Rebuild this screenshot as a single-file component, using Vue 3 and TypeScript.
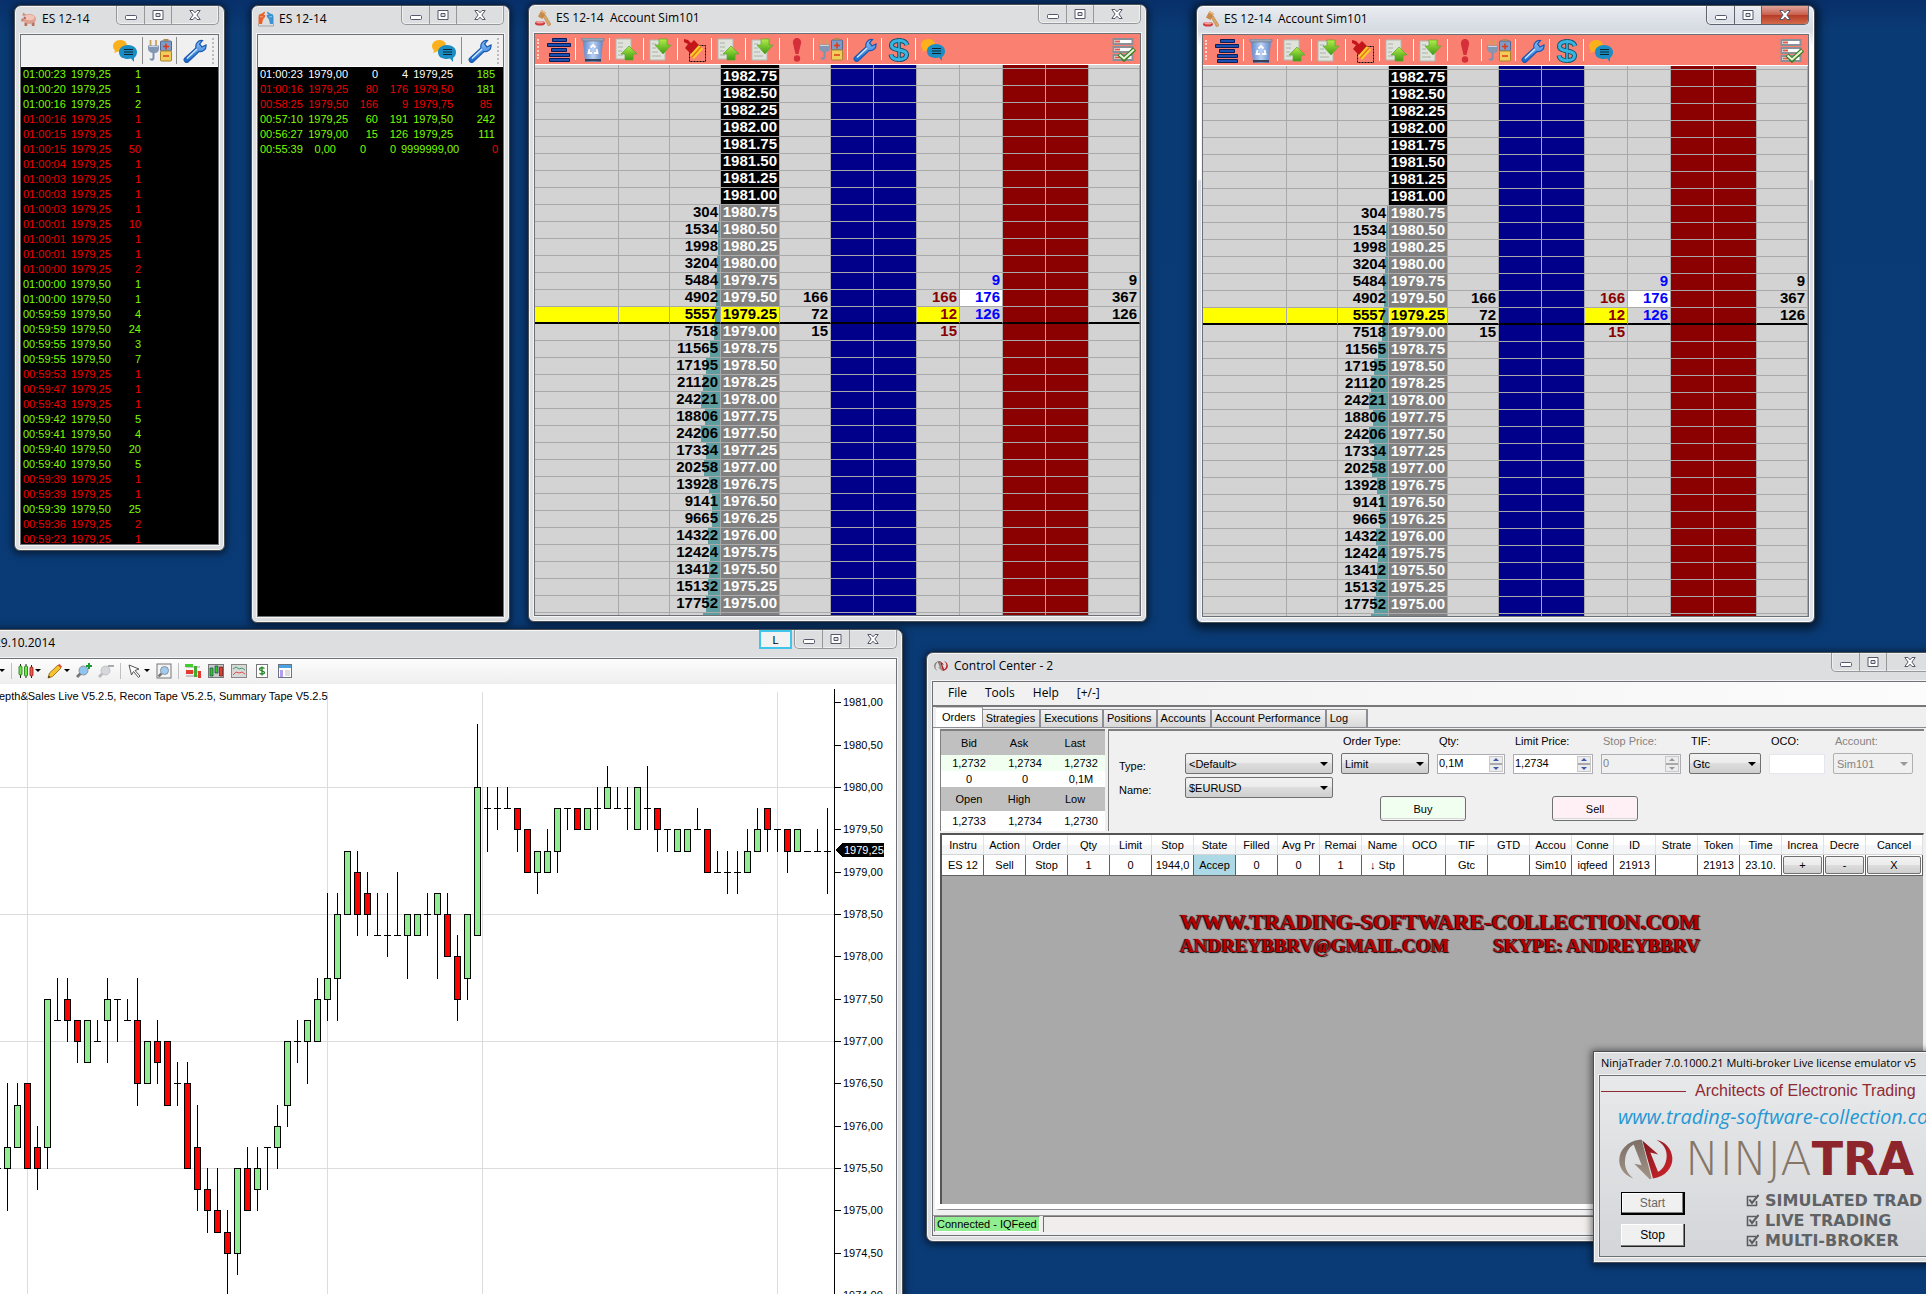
<script setup lang="ts">
type Tone = 'up' | 'down' | 'flat'

interface Trade { time: string; price: string; size: string; tone: Tone }
const trade = (line: string): Trade => {
  const [time, price, size, flag] = line.split(' ')
  return { time, price, size, tone: flag === 'u' ? 'up' : 'down' }
}
const trades: Trade[] = [
  '01:00:23 1979,25 1 u', '01:00:20 1979,25 1 u', '01:00:16 1979,25 2 u', '01:00:16 1979,25 1 d',
  '01:00:15 1979,25 1 d', '01:00:15 1979,25 50 d', '01:00:04 1979,25 1 d', '01:00:03 1979,25 1 d',
  '01:00:03 1979,25 1 d', '01:00:03 1979,25 1 d', '01:00:01 1979,25 10 d', '01:00:01 1979,25 1 d',
  '01:00:01 1979,25 1 d', '01:00:00 1979,25 2 d', '01:00:00 1979,50 1 u', '01:00:00 1979,50 1 u',
  '00:59:59 1979,50 4 u', '00:59:59 1979,50 24 u', '00:59:55 1979,50 3 u', '00:59:55 1979,50 7 u',
  '00:59:53 1979,25 1 d', '00:59:47 1979,25 1 d', '00:59:43 1979,25 1 d', '00:59:42 1979,50 5 u',
  '00:59:41 1979,50 4 u', '00:59:40 1979,50 20 u', '00:59:40 1979,50 5 u', '00:59:39 1979,25 1 d',
  '00:59:39 1979,25 1 d', '00:59:39 1979,50 25 u', '00:59:36 1979,25 2 d', '00:59:23 1979,25 1 d',
].map(trade)

interface Recon { cells: string[]; total: string; tone: Tone; totalTone: Tone; blank?: boolean }
const recon: Recon[] = [
  { cells: ['01:00:23', '1979,00', '0', '4', '1979,25'], total: '185', tone: 'flat', totalTone: 'up' },
  { cells: ['01:00:16', '1979,25', '80', '176', '1979,50'], total: '181', tone: 'down', totalTone: 'up' },
  { cells: ['00:58:25', '1979,50', '166', '9', '1979,75'], total: '85', tone: 'down', totalTone: 'down' },
  { cells: ['00:57:10', '1979,25', '60', '191', '1979,50'], total: '242', tone: 'up', totalTone: 'up' },
  { cells: ['00:56:27', '1979,00', '15', '126', '1979,25'], total: '111', tone: 'up', totalTone: 'up' },
  { cells: ['00:55:39', '0,00', '0', '0', '9999999,00'], total: '0', tone: 'up', totalTone: 'down', blank: true },
]

const volumes = [
  0, 0, 0, 0, 0, 0, 0, 0, 304, 1534, 1998, 3204, 5484, 4902, 5557, 7518, 11565, 17195, 21120, 24221,
  18806, 24206, 17334, 20258, 13928, 9141, 9665, 14322, 12424, 13412, 15132, 17752,
]
const extras: Record<string, { last: string; sell: string; buy: string; sum: string }> = {
  '1979.75': { last: '', sell: '', buy: '9', sum: '9' },
  '1979.50': { last: '166', sell: '166', buy: '176', sum: '367' },
  '1979.25': { last: '72', sell: '12', buy: '126', sum: '126' },
  '1979.00': { last: '15', sell: '15', buy: '', sum: '' },
}
const ladder = volumes.map((volume, i) => {
  const price = (1982.75 - i * 0.25).toFixed(2)
  return {
    price,
    volume: volume ? String(volume) : '',
    bar: Math.ceil(volume * 0.00078),
    beyond: i < 8,
    current: price === '1979.25',
    best: price === '1979.50',
    ...(extras[price] ?? { last: '', sell: '', buy: '', sum: '' }),
  }
})
const ladderWindows = [
  { id: 'dom-a', active: false },
  { id: 'dom-b', active: true },
]
const ladderTools = [
  ['i-stack', 'Center'], ['i-trash', 'Clear'], ['i-doc-up', 'Level up'], ['i-doc-down', 'Level down'],
  ['i-brush', 'Clean'], ['i-doc-up', 'Page up'], ['i-doc-down', 'Page down'], ['i-alert', 'Alert'],
  ['i-power', 'Connection'], ['i-wrench', 'Settings'], ['i-dollar', 'Profit'], ['i-chat', 'Messages'],
]

/* Chart levels are quarter points below 1980,00: x, colour, open/close range, wick range */
type Candle = [number, 'g' | 'r' | 'd', number, number, number, number]
const candles: Candle[] = [
  [-3, 'd', 18, 18, 18, 18], [7, 'g', 17, 18, 14, 20], [17, 'g', 15, 17, 14, 17], [27, 'r', 14, 18, 14, 18],
  [37, 'r', 17, 18, 16, 19], [47, 'g', 10, 17, 10, 18], [57, 'd', 11, 11, 9, 11], [67, 'r', 10, 11, 9, 12],
  [77, 'r', 11, 12, 11, 13], [87, 'g', 11, 13, 11, 13], [97, 'd', 12, 12, 11, 12], [107, 'g', 10, 11, 9, 13],
  [117, 'd', 10, 10, 10, 12], [127, 'd', 11, 11, 10, 11], [137, 'r', 11, 14, 9, 15], [147, 'g', 12, 14, 12, 14],
  [157, 'r', 12, 13, 11, 14], [167, 'r', 12, 15, 12, 15], [177, 'd', 14, 14, 13, 15], [187, 'r', 14, 18, 13, 18],
  [197, 'r', 17, 19, 15, 20], [207, 'r', 19, 20, 18, 21], [217, 'r', 20, 21, 18, 21], [227, 'r', 21, 22, 20, 25],
  [237, 'g', 18, 22, 18, 23], [247, 'r', 18, 20, 17, 20], [257, 'g', 18, 19, 17, 20], [267, 'd', 17, 17, 17, 19],
  [277, 'g', 16, 17, 15, 18], [287, 'g', 12, 15, 12, 16], [297, 'd', 12, 12, 11, 13], [307, 'g', 11, 12, 11, 14],
  [317, 'g', 10, 12, 9, 12], [327, 'g', 9, 10, 5, 11], [337, 'g', 6, 9, 5, 11], [347, 'g', 3, 6, 3, 6],
  [357, 'r', 4, 6, 3, 7], [367, 'r', 5, 6, 4, 7], [377, 'd', 7, 7, 5, 7], [387, 'd', 7, 7, 5, 8],
  [397, 'd', 7, 7, 4, 7], [407, 'g', 6, 7, 6, 9], [417, 'g', 6, 7, 6, 7], [427, 'd', 6, 6, 5, 7],
  [437, 'g', 5, 6, 5, 9], [447, 'r', 6, 8, 5, 8], [457, 'r', 8, 10, 7, 11], [467, 'g', 6, 9, 6, 10],
  [477, 'g', 0, 7, -3, 7], [487, 'd', 1, 1, 0, 3], [497, 'd', 1, 1, 0, 2], [507, 'd', 1, 1, 0, 1],
  [517, 'r', 1, 2, 1, 3], [527, 'r', 2, 4, 2, 4], [537, 'g', 3, 4, 3, 5], [547, 'g', 3, 4, 2, 4],
  [557, 'g', 1, 3, 1, 4], [567, 'd', 1, 1, 1, 2], [577, 'r', 1, 2, 1, 2], [587, 'g', 1, 2, 1, 2],
  [597, 'd', 1, 1, 0, 2], [607, 'g', 0, 1, -1, 1], [617, 'd', 1, 1, 0, 1], [627, 'd', 1, 1, 0, 2],
  [637, 'g', 0, 2, 0, 2], [647, 'd', 1, 1, -1, 2], [657, 'r', 1, 2, 1, 3], [667, 'd', 2, 2, 2, 3],
  [677, 'g', 2, 3, 2, 3], [687, 'g', 2, 3, 2, 3], [697, 'd', 2, 2, 1, 2], [707, 'r', 2, 4, 2, 4],
  [717, 'd', 4, 4, 3, 4], [727, 'd', 4, 4, 3, 5], [737, 'd', 4, 4, 3, 5], [747, 'g', 3, 4, 2, 4],
  [757, 'g', 2, 3, 1, 3], [767, 'r', 1, 2, 1, 3], [777, 'd', 2, 2, 2, 3], [787, 'r', 2, 3, 2, 4],
  [797, 'g', 2, 3, 2, 3], [807, 'd', 3, 3, 3, 3], [817, 'd', 3, 3, 2, 3], [827, 'd', 3, 3, 1, 5],
]
const levelY = (q: number): number => Math.round(103 + (q * 127) / 6)
const verticals = [27, 327, 482, 777]
const horizontals = [0, 6, 12, 18]
const axis = Array.from({ length: 15 }, (_, i) => ({
  label: (1981 - i * 0.5).toFixed(2).replace('.', ','),
  y: levelY(i * 2 - 4),
}))

const menus = ['File', 'Tools', 'Help', '[+/-]']
const tabs = ['Orders', 'Strategies', 'Executions', 'Positions', 'Accounts', 'Account Performance', 'Log']
const quoteRows = [
  { kind: 'head', cells: ['Bid', 'Ask', 'Last'] },
  { kind: 'mint', cells: ['1,2732', '1,2734', '1,2732'] },
  { kind: 'plain', cells: ['0', '0', '0,1M'] },
  { kind: 'head', cells: ['Open', 'High', 'Low'] },
  { kind: 'tall', cells: ['1,2733', '1,2734', '1,2730'] },
]
const orderColumns: [string, string][] = [
  ['Instru', 'ES 12'], ['Action', 'Sell'], ['Order', 'Stop'], ['Qty', '1'], ['Limit', '0'], ['Stop', '1944,0'],
  ['State', 'Accep'], ['Filled', '0'], ['Avg Pr', '0'], ['Remai', '1'], ['Name', '↓ Stp'], ['OCO', ''],
  ['TIF', 'Gtc'], ['GTD', ''], ['Accou', 'Sim10'], ['Conne', 'iqfeed'], ['ID', '21913'], ['Strate', ''],
  ['Token', '21913'], ['Time', '23.10.'], ['Increa', '+'], ['Decre', '-'], ['Cancel', 'X'],
]
const features = ['SIMULATED TRAD', 'LIVE TRADING', 'MULTI-BROKER']
const captions = ['min', 'max', 'close']
</script>

<template>
  <svg class="sprite" aria-hidden="true">
    <defs>
      <linearGradient id="g-blue" x1="0" y1="0" x2="0" y2="1"><stop offset="0" stop-color="#8cc4f8" /><stop offset="1" stop-color="#1466cf" /></linearGradient>
      <linearGradient id="g-green" x1="0" y1="0" x2="0" y2="1"><stop offset="0" stop-color="#b4ee4a" /><stop offset="1" stop-color="#3d9a12" /></linearGradient>
      <linearGradient id="g-bin" x1="0" y1="0" x2="1" y2="0"><stop offset="0" stop-color="#5f87c8" /><stop offset=".5" stop-color="#bcd2f4" /><stop offset="1" stop-color="#5f87c8" /></linearGradient>
      <linearGradient id="g-brown" x1="0" y1="0" x2="0" y2="1"><stop offset="0" stop-color="#7b6e66" /><stop offset="1" stop-color="#a39386" /></linearGradient>
      <linearGradient id="g-red" x1="0" y1="0" x2="1" y2="1"><stop offset="0" stop-color="#7e1a20" /><stop offset="1" stop-color="#d3222a" /></linearGradient>

      <symbol id="i-min" viewBox="0 0 12 12"><rect x=".5" y="6.500" width="11" height="4" rx="1" fill="#fff" stroke="#53586a" /></symbol>
      <symbol id="i-max" viewBox="0 0 12 12"><path fill-rule="evenodd" d="M1 1.500h10v9H1zM4 4.500h4v3H4z" fill="#fff" stroke="#53586a" /></symbol>
      <symbol id="i-close" viewBox="0 0 12 12"><path d="M.8 1.500h3.200L6 3.800l2-2.300h3.200L7.900 6l3.300 4.500H8L6 8.200l-2 2.300H.8L4.100 6z" fill="#fff" stroke="#53586a" /></symbol>

      <symbol id="i-pig" viewBox="0 0 16 16"><ellipse cx="8.500" cy="8" rx="6.500" ry="5" fill="#dda090" /><ellipse cx="8.500" cy="6.500" rx="5" ry="2.800" fill="#f0c4b6" /><path d="M1.500 5l.5-3.500L5.500 4z" fill="#d08c7c" /><path d="M3.500 11.500V15H6l.5-2.500zM10.500 12.500L11 15h2.500v-4z" fill="#b87060" /><circle cx="4" cy="7" r=".8" fill="#713" /><path d="M.5 7.500h2v3h-2z" fill="#c27666" /></symbol>
      <symbol id="i-hands" viewBox="0 0 16 16"><path d="M.5 13V6L1 3.500l3-1L6.500.5 7 2 5.500 3.800l1.800.2L7 6 5 8.500 4 13z" fill="#e8632c" /><path d="M2 5.500l3 .5" stroke="#f6a27c" /><path d="M15.500 13V6L15 3.500l-3-1L9.500.5 9 2l1.500 1.800L8.700 4 9 6l2 2.500 1 4.500z" fill="#3c93cf" /><path d="M14 5.500L11 6" stroke="#8cc6ec" /><path d="M.5 13v2h15v-2" fill="none" stroke="#a5a5a5" /></symbol>
      <symbol id="i-gavel" viewBox="0 0 16 16"><path d="M6.500 0L11 2.500 7.500 9 3 6.500z" fill="#c98b4a" /><path d="M6.500 0L11 2.500l-.8 1.500-4.500-2.500z" fill="#e6ba80" /><path d="M8 6l2.300-1L16 14.500 13.500 16z" fill="#dba765" stroke="#a9743c" stroke-width=".5" /><ellipse cx="5" cy="13.300" rx="5" ry="2.300" fill="#cf3a3a" /><ellipse cx="5" cy="12.200" rx="3.800" ry="1.200" fill="#f0a0a0" /></symbol>

      <symbol id="i-chat" viewBox="0 0 24 24"><path d="M7 1C3 1 0 4 0 7c0 3 2 4 2 5l-1 2 4-1.500C12 13 14 10 14 7c0-4-3-6-7-6z" fill="#fbb01c" /><path d="M15 6c-5 0-9 3-9 7 0 5 4 7 9 7 1 0 2 0 3-.4L21 23v-4c2-1.500 3-3.500 3-6 0-4-4-7-9-7z" fill="#1a8ec4" /><path d="M11 10.500h9M11 13h9M11 15.500h9" stroke="#10242f" stroke-width="1.200" /></symbol>
      <symbol id="i-power" viewBox="0 0 24 24"><path d="M2.500 1v6M8 1v6" stroke="#c9a25c" stroke-width="1.800" /><path d="M0 6.500h11v3c0 3-2 4.500-4 4.500H4.500C2 13.500 0 12 0 9.500" fill="#8498b4" /><path d="M1 7.500h9" stroke="#c8d4e4" /><path d="M5.500 13v5.500c0 3-3 2.500-3 1" fill="none" stroke="#7b91b2" stroke-width="2" /><rect x="12.500" y="2" width="11" height="10" rx="1" fill="#7e9cc8" stroke="#55688c" /><rect x="15.500" y="0" width="5" height="2" fill="#b08a50" /><rect x="12.500" y="12" width="11" height="10" rx="1" fill="#f2cc5a" stroke="#a8842c" /><path d="M15 7.500h6M18 4.500v6M15 17h6" stroke="#e03a14" stroke-width="1.600" /></symbol>
      <symbol id="i-wrench" viewBox="0 0 24 24"><path d="M1.500 19.500L13 9c-1-4 2-8 6.500-7.500L16.500 5l2.500 3 4-2c.5 4-3 7.500-7 6.500L5 23c-2 1.500-5-1.500-3.500-3.500z" fill="url(#g-blue)" stroke="#1b58ae" stroke-width="1.200" /><path d="M4 19.500l10-9.500" stroke="#d6ebff" stroke-width="1.300" /></symbol>
      <symbol id="i-stack" viewBox="0 0 24 24"><path d="M5.500.5h14v3h-14zM.5 5.500h23v3H.5zM4.500 10.500h15v3h-15zM2.500 15.500h20v3h-20zM2.500 20.500h20v3h-20z" fill="#1c51b4" stroke="#0a1c58" /></symbol>
      <symbol id="i-trash" viewBox="0 0 24 24"><path d="M2 2h20l-2 22H4z" fill="url(#g-bin)" /><path d="M4 21h16v2.500H4z" fill="#33405c" /><rect x="1" y="0" width="22" height="3" rx="1" fill="#9aa7b8" stroke="#5f6b80" stroke-width=".6" /><path d="M9.500 9.500l2.500-2.500 2.500 2.500M15.500 11l1 4H13M8.500 11l-1 4H11" fill="none" stroke="#fff" stroke-width="1.800" /></symbol>
      <symbol id="i-doc-up" viewBox="0 0 24 24"><path d="M1 1h15v20H1z" fill="#dfe3dc" stroke="#b5b9b0" /><path d="M3 5h5M3 9h5M3 13h4M3 17h5" stroke="#aab0a8" /><path d="M14 8l8 8h-4v6h-8v-6H6z" fill="url(#g-green)" stroke="#5aa62a" stroke-width=".7" /></symbol>
      <symbol id="i-doc-down" viewBox="0 0 24 24"><path d="M1 2h15v20H1z" fill="#dfe3dc" stroke="#b5b9b0" /><path d="M3 6h4M3 10h4M3 14h6M3 18h9" stroke="#aab0a8" /><path d="M10 1h8v6h4l-8 9-8-9h4z" fill="url(#g-green)" stroke="#5aa62a" stroke-width=".7" /></symbol>
      <symbol id="i-brush" viewBox="0 0 24 24"><rect x="6.500" y="7.500" width="16" height="16" fill="none" stroke="#000" stroke-dasharray="2 1" /><path d="M1 1l4 1 3 3 3-3 5 5-8 9-6-6 3-4-4-2z" fill="#c4161a" /><path d="M16 7l4 4-9 10-4-4z" fill="#f8cf28" /><path d="M18 9l-9 10" stroke="#f0701c" stroke-width="1.500" /></symbol>
      <symbol id="i-alert" viewBox="0 0 24 24"><path d="M12 0c3 0 4.500 2.500 4 5.500L13.500 16h-3L8 5.500C7.500 2.500 9 0 12 0z" fill="#d5303a" /><circle cx="12" cy="20.500" r="3.200" fill="#d5303a" /></symbol>
      <symbol id="i-dollar" viewBox="0 0 24 24"><path d="M12 0v24" stroke="#14506c" stroke-width="3.600" /><path d="M20 7c-1-3-4-4.500-8-4.500S4.500 4 4.500 7.500c0 6 15 3 15 9 0 3.500-3.500 5-7.500 5S4.500 20 4 16.500" fill="none" stroke="#14506c" stroke-width="5" /><path d="M12 .8v22.400" stroke="#35b5e0" stroke-width="1.600" /><path d="M20 7c-1-3-4-4.500-8-4.500S4.500 4 4.500 7.500c0 6 15 3 15 9 0 3.500-3.500 5-7.500 5S4.500 20 4 16.500" fill="none" stroke="#35b5e0" stroke-width="3" /></symbol>
      <symbol id="i-list" viewBox="0 0 24 24"><path d="M1.500 1h19v5h-19zM1.500 9h19v5h-19zM1.500 17h19v5h-19z" fill="#fff" stroke="#8a9098" stroke-width="2" /><path d="M3 3.500h5M3 11.500h5M3 19.500h5" stroke="#e45a4a" stroke-width="2" /><path d="M7 16l5 5L22.500 11" fill="none" stroke="#3f7d28" stroke-width="4.500" /><path d="M7.500 16.500l4.500 4L22 11.500" fill="none" stroke="#e6f5d8" stroke-width="2" /></symbol>

      <symbol id="i-candles" viewBox="0 0 16 16"><path d="M2.500 1v14M8 1v14M13.500 2v13" stroke="#222" /><rect x="1" y="3" width="3" height="9" rx="1" fill="#6fe84a" stroke="#1d6e12" stroke-width=".8" /><rect x="6.500" y="3" width="3" height="10" rx="1" fill="#6fe84a" stroke="#1d6e12" stroke-width=".8" /><rect x="12" y="4" width="3" height="9" rx="1" fill="#ee5a4c" stroke="#8c1610" stroke-width=".8" /></symbol>
      <symbol id="i-pencil" viewBox="0 0 16 16"><path d="M1 15l1.500-5L11 2l3 3-8.500 8.500z" fill="#f4c430" stroke="#a8781a" /><path d="M11 2l1.500-1.300L15 3.500 14 5z" fill="#e0554a" /><path d="M1 15l.8-2.500 1.700 1.700z" fill="#333" /></symbol>
      <symbol id="i-zoom-in" viewBox="0 0 16 16"><path d="M1 14l4-4" stroke="#777" stroke-width="3" /><circle cx="7.500" cy="7.500" r="4.500" fill="#8fc4ee" stroke="#8a929c" /><path d="M13 0v6M10 3h6" stroke="#1c9a30" stroke-width="2" /></symbol>
      <symbol id="i-zoom-out" viewBox="0 0 16 16"><path d="M1 14l4-4" stroke="#bbb" stroke-width="3" /><circle cx="7.500" cy="7.500" r="4.500" fill="#d5d7da" stroke="#bfc2c6" /><path d="M10 3h6" stroke="#aaa" stroke-width="2" /></symbol>
      <symbol id="i-pointer" viewBox="0 0 16 16"><path d="M2 2l10 4-4 1.500 5 5.500-1.500 1.500-5-6L4.500 12z" fill="#fff" stroke="#555" /></symbol>
      <symbol id="i-find" viewBox="0 0 16 16"><rect x="1" y="1" width="14" height="14" fill="#f4f4f4" stroke="#777" /><path d="M2.500 13.500l3-3" stroke="#777" stroke-width="2.500" /><circle cx="8.500" cy="7.500" r="4" fill="#9fccf0" stroke="#8a929c" /></symbol>
      <symbol id="i-depth" viewBox="0 0 16 16"><path d="M1 4h14M1 9h14M1 13h14" stroke="#999" /><path d="M0 1h8v3H0z" fill="#3fce2c" /><path d="M1 7h7v4H1z" fill="#e23c30" /><path d="M9 3h3v11H9z" fill="#3fae2c" /><path d="M13 8h3v7h-3z" fill="#e23c30" /></symbol>
      <symbol id="i-bars" viewBox="0 0 16 16"><rect x=".5" y="1.500" width="15" height="13" fill="#c8c8c8" stroke="#777" /><path d="M2 5h3v8H2zM7 3h3v7H7z" fill="#36c424" stroke="#145" stroke-width=".7" /><path d="M11.500 4h3v9h-3z" fill="#e23c30" stroke="#611" stroke-width=".7" /></symbol>
      <symbol id="i-lines" viewBox="0 0 16 16"><rect x=".5" y="1.500" width="15" height="13" fill="#d8d8d8" stroke="#888" /><path d="M2 6l3-2 3 2 3-1 3 2" fill="none" stroke="#3aa06a" /><path d="M2 12l3-3 3 1 3-1 3 2" fill="none" stroke="#e05050" /></symbol>
      <symbol id="i-money" viewBox="0 0 16 16"><rect x="2.500" y="1.500" width="11" height="13" fill="#fff" stroke="#777" /><path d="M10.500 5.500c-2-1.500-5-.8-5 .8 0 2 5 1.200 5 3.200 0 1.800-3.300 2-5 .8M8 3.500v9" fill="none" stroke="#2a8a2a" stroke-width="1.400" /></symbol>
      <symbol id="i-panel" viewBox="0 0 16 16"><rect x="1.500" y="1.500" width="13" height="13" fill="#fff" stroke="#6c7484" /><path d="M2 2h12v3H2z" fill="#4aa3e0" /><path d="M3 7h3v7H3z" fill="#b49cf0" /><path d="M8 8h5M8 10h5M8 12h5" stroke="#bbb" /></symbol>

      <symbol id="i-ninja" viewBox="0 0 162 122"><path d="M62 2C24 6-2 36 1 68c2 24 18 42 42 50C26 104 16 86 18 66c1-24 12-42 26-50l24 62-22-4 46 46 6-2L68 2z" fill="url(#g-brown)" /><path d="M70 4l32 114c36-4 60-32 58-62-2-28-22-48-48-54 20 12 32 28 31 50-1 22-12 40-26 46L94 40l24 6z" fill="url(#g-red)" /></symbol>
      <symbol id="i-check" viewBox="0 0 14 14"><path d="M10 2.500H1.500v9h9V7" fill="none" stroke="#5a5d60" stroke-width="1.600" /><path d="M3.500 5.500L6 9l6.500-8" fill="none" stroke="#5a5d60" stroke-width="2" /></symbol>
    </defs>
  </svg>

  <main class="desktop">
    <section class="win tape-win">
      <header class="title">
        <svg class="app-icon"><use href="#i-pig" /></svg>
        <h2>ES 12-14</h2>
        <div class="captions"><button v-for="c in captions" :key="c" :class="c" :aria-label="c"><svg><use :href="'#i-' + c" /></svg></button></div>
      </header>
      <div class="client">
        <div class="tape-tools">
          <button aria-label="Messages"><svg><use href="#i-chat" /></svg></button>
          <button aria-label="Connection"><svg><use href="#i-power" /></svg></button>
          <button aria-label="Settings"><svg><use href="#i-wrench" /></svg></button>
          <i class="grip"></i>
        </div>
        <table class="tape">
          <tbody>
            <tr v-for="(t, i) in trades" :key="i" :class="t.tone">
              <td class="time">{{ t.time }}</td><td class="price">{{ t.price }}</td><td class="size">{{ t.size }}</td><td></td>
            </tr>
          </tbody>
        </table>
      </div>
    </section>

    <section class="win recon-win">
      <header class="title">
        <svg class="app-icon"><use href="#i-hands" /></svg>
        <h2>ES 12-14</h2>
        <div class="captions"><button v-for="c in captions" :key="c" :class="c" :aria-label="c"><svg><use :href="'#i-' + c" /></svg></button></div>
      </header>
      <div class="client">
        <div class="tape-tools">
          <button aria-label="Messages"><svg><use href="#i-chat" /></svg></button>
          <button aria-label="Settings"><svg><use href="#i-wrench" /></svg></button>
          <i class="grip"></i>
        </div>
        <table class="tape recon">
          <colgroup><col class="c-time"><col class="c-price"><col class="c-qty"><col class="c-qty"><col class="c-ask"><col></colgroup>
          <tbody>
            <tr v-for="(r, i) in recon" :key="i" :class="[r.tone, { blank: r.blank }]">
              <td v-for="(c, k) in r.cells" :key="k">{{ c }}</td>
              <td :class="['total', r.totalTone]">{{ r.total }}</td>
            </tr>
          </tbody>
        </table>
      </div>
    </section>

    <section v-for="w in ladderWindows" :key="w.id" :class="['win', 'dom-win', w.id, { active: w.active }]">
      <header class="title">
        <svg class="app-icon"><use href="#i-gavel" /></svg>
        <h2>ES 12-14&nbsp; Account Sim101</h2>
        <div class="captions"><button v-for="c in captions" :key="c" :class="c" :aria-label="c"><svg><use :href="'#i-' + c" /></svg></button></div>
      </header>
      <div class="client">
        <div class="dom-tools">
          <i class="grip"></i>
          <button v-for="(t, i) in ladderTools" :key="i" :aria-label="t[1]"><svg><use :href="'#' + t[0]" /></svg></button>
          <button class="list" aria-label="Columns"><svg><use href="#i-list" /></svg></button>
        </div>
        <table class="ladder">
          <colgroup>
            <col class="w84"><col class="w51"><col class="w51"><col class="w59"><col class="w51">
            <col v-for="n in 6" :key="n" class="w43"><col>
          </colgroup>
          <tbody>
            <tr class="sliver">
              <td></td><td></td><td></td><td class="px beyond"></td><td></td><td class="bid"></td><td class="bid"></td><td></td><td></td><td class="ask"></td><td class="ask"></td><td></td>
            </tr>
            <tr v-for="r in ladder" :key="r.price" :class="{ current: r.current }">
              <td class="hl"></td><td class="hl"></td>
              <td class="hl vol" :style="{ backgroundSize: r.bar + 'px 100%' }">{{ r.volume }}</td>
              <td :class="['px', { beyond: r.beyond }]">{{ r.price }}</td>
              <td>{{ r.last }}</td>
              <td class="bid"></td><td class="bid"></td>
              <td class="sold">{{ r.sell }}</td>
              <td :class="['bought', { best: r.best }]">{{ r.buy }}</td>
              <td class="ask"></td><td class="ask"></td>
              <td>{{ r.sum }}</td>
            </tr>
            <tr>
              <td></td><td></td><td class="vol" :style="{ backgroundSize: '17px 100%' }"></td><td class="px"></td><td></td><td class="bid"></td><td class="bid"></td><td></td><td></td><td class="ask"></td><td class="ask"></td><td></td>
            </tr>
          </tbody>
        </table>
      </div>
    </section>

    <section class="win chart-win">
      <header class="title">
        <h2>29.10.2014</h2>
        <button class="link-btn">L</button>
        <div class="captions"><button v-for="c in captions" :key="c" :class="c" :aria-label="c"><svg><use :href="'#i-' + c" /></svg></button></div>
      </header>
      <div class="client">
        <div class="chart-tools">
          <button class="drop" aria-label="Interval"></button>
          <i class="sep"></i>
          <button class="drop" aria-label="Style"><svg><use href="#i-candles" /></svg></button>
          <button class="drop" aria-label="Draw"><svg><use href="#i-pencil" /></svg></button>
          <button aria-label="Zoom in"><svg><use href="#i-zoom-in" /></svg></button>
          <button aria-label="Zoom out"><svg><use href="#i-zoom-out" /></svg></button>
          <i class="sep"></i>
          <button class="drop" aria-label="Pointer"><svg><use href="#i-pointer" /></svg></button>
          <button aria-label="Find"><svg><use href="#i-find" /></svg></button>
          <i class="sep"></i>
          <div class="views">
            <button v-for="n in ['depth', 'bars', 'lines', 'money', 'panel']" :key="n" :aria-label="n"><svg><use :href="'#i-' + n" /></svg></button>
          </div>
        </div>
        <div class="plot">
          <svg class="candles" shape-rendering="crispEdges">
            <line v-for="x in verticals" :key="'v' + x" class="grid" :x1="x + 0.5" :x2="x + 0.5" y1="8" y2="100%" />
            <line v-for="q in horizontals" :key="'h' + q" class="grid" x1="0" x2="834" :y1="levelY(q) + 0.5" :y2="levelY(q) + 0.5" />
            <g v-for="c in candles" :key="c[0]">
              <rect v-if="c[4] !== c[5]" :x="c[0]" :y="levelY(c[4])" width="1" :height="levelY(c[5]) - levelY(c[4]) + 1" />
              <rect v-if="c[1] === 'd'" :x="c[0] - 3" :y="levelY(c[2])" width="7" height="1" />
              <rect v-else :class="c[1]" :x="c[0] - 2.5" :y="levelY(c[2]) + 0.5" width="6" :height="levelY(c[3]) - levelY(c[2])" />
            </g>
            <rect x="834" y="5" width="1" height="100%" />
            <g v-for="a in axis" :key="a.label">
              <rect x="835" :y="a.y" width="6" height="1" />
              <text x="843" :y="a.y + 4">{{ a.label }}</text>
            </g>
            <path d="M836 166l6-7h42v14h-42z" />
            <text class="tag" x="844" y="170">1979,25</text>
          </svg>
          <p class="studies">epth&amp;Sales Live V5.2.5, Recon Tape V5.2.5, Summary Tape V5.2.5</p>
        </div>
      </div>
    </section>

    <section class="win control-win">
      <header class="title">
        <svg class="app-icon"><use href="#i-ninja" /></svg>
        <h2>Control Center - 2</h2>
        <div class="captions"><button v-for="c in captions" :key="c" :class="c" :aria-label="c"><svg><use :href="'#i-' + c" /></svg></button></div>
      </header>
      <div class="client">
        <nav class="menu"><button v-for="m in menus" :key="m">{{ m }}</button></nav>
        <div class="tabs" role="tablist">
          <button v-for="(t, i) in tabs" :key="t" role="tab" :class="{ on: i === 0, last: t === 'Log' }">{{ t }}</button>
        </div>
        <div class="pane">
          <div class="ticket">
            <div class="quotes">
              <div v-for="(r, i) in quoteRows" :key="i" :class="['quote', r.kind]"><span v-for="(c, k) in r.cells" :key="k">{{ c }}</span></div>
            </div>
            <form class="entry" @submit.prevent>
              <div class="ident">
                <label for="tpl">Type:</label>
                <span class="select"><select id="tpl"><option>&lt;Default&gt;</option></select></span>
                <label for="sym">Name:</label>
                <span class="select"><select id="sym"><option>$EURUSD</option></select></span>
              </div>
              <div class="params">
                <div class="fields">
                  <div class="field f88"><label for="otype">Order Type:</label><span class="select"><select id="otype"><option>Limit</option></select></span></div>
                  <div class="field f70"><label for="qty">Qty:</label><span class="spin"><input id="qty" value="0,1M"><i></i></span></div>
                  <div class="field f80"><label for="lim">Limit Price:</label><span class="spin"><input id="lim" value="1,2734"><i></i></span></div>
                  <div class="field f80 off"><label for="stp">Stop Price:</label><span class="spin"><input id="stp" value="0" disabled><i></i></span></div>
                  <div class="field f72"><label for="tif">TIF:</label><span class="select"><select id="tif"><option>Gtc</option></select></span></div>
                  <div class="field f56"><label for="oco">OCO:</label><input id="oco" class="plain-input"></div>
                  <div class="field f80 off"><label for="acc">Account:</label><span class="select"><select id="acc" disabled><option>Sim101</option></select></span></div>
                </div>
                <div class="trade-btns"><button class="buy">Buy</button><button class="sell">Sell</button></div>
              </div>
            </form>
          </div>
          <div class="orders">
            <table>
              <colgroup><col v-for="n in 22" :key="n" class="w42"><col></colgroup>
              <thead><tr><th v-for="c in orderColumns" :key="c[0]">{{ c[0] }}</th></tr></thead>
              <tbody>
                <tr>
                  <td v-for="(c, i) in orderColumns" :key="c[0]" :class="{ accepted: c[0] === 'State' }">
                    <button v-if="i > 19">{{ c[1] }}</button><template v-else>{{ c[1] }}</template>
                  </td>
                </tr>
              </tbody>
            </table>
            <div class="watermark">
              <p class="big">WWW.TRADING-SOFTWARE-COLLECTION.COM</p>
              <p><span>ANDREYBBRV@GMAIL.COM</span><span>SKYPE: ANDREYBBRV</span></p>
            </div>
          </div>
        </div>
        <footer class="status"><span class="conn">Connected - IQFeed</span><span class="rest"></span></footer>
      </div>
    </section>

    <section class="win emu-win">
      <header class="title"><h2>NinjaTrader 7.0.1000.21 Multi-broker Live license emulator v5</h2></header>
      <div class="client">
        <p class="motto"><i></i>Architects of Electronic Trading</p>
        <a class="site" href="#">www.trading-software-collection.co</a>
        <div class="brand"><svg><use href="#i-ninja" /></svg><span>NINJA<b>TRA</b></span></div>
        <div class="emu-body">
          <div class="emu-btns"><button class="start">Start</button><button>Stop</button></div>
          <ul><li v-for="f in features" :key="f"><svg><use href="#i-check" /></svg>{{ f }}</li></ul>
        </div>
      </div>
    </section>
  </main>
</template>

<style>
body { margin: 0; background: #0a3b76; }
</style>

<style scoped>
.sprite { position: absolute; width: 0; height: 0; }
.desktop {
  position: relative; min-height: 100vh; overflow: hidden;
  background: linear-gradient(#08306a, #0a3a74 30px, #0a3b76);
  font: 11px/14px "Microsoft Sans Serif", "Liberation Sans", Arial, sans-serif; color: #000;
}
button, input, select { font: inherit; color: inherit; margin: 0; padding: 0; box-sizing: border-box; }
button { border: 0; background: none; }
h2, p, ul { margin: 0; padding: 0; list-style: none; font-weight: 400; }
table { border-collapse: separate; border-spacing: 0; table-layout: fixed; }
td, th { padding: 0; }
th { font-weight: 400; }

/* window frames */
.win {
  position: absolute; box-sizing: border-box; display: flex; flex-direction: column;
  padding: 0 5px 5px; border: 1px solid #4a4f56; border-radius: 7px 7px 6px 6px; background: #dddee0;
  box-shadow: inset 0 0 0 1px #f6f6f7, 0 1px 7px 2px rgba(0, 0, 0, .5);
}
.title { display: flex; align-items: flex-start; height: 28px; flex: none; }
.title h2 { flex: 1; font: 12px/16px "Segoe UI", "Open Sans", "Noto Sans", sans-serif; white-space: nowrap; padding-top: 5px; }
.app-icon { width: 16px; height: 16px; margin: 5px 5px 0 1px; }
.client { flex: 1; min-height: 0; display: flex; flex-direction: column; overflow: hidden; border: 1px solid #6d7074; box-shadow: 0 0 0 1px #f4f4f5; }
.captions { display: flex; border: 1px solid #96989c; border-top: 0; border-radius: 0 0 5px 5px; box-shadow: inset 0 0 0 1px #eeeff0; }
.captions button { width: 27px; height: 18px; display: grid; place-items: center; }
.captions button + button { border-left: 1px solid #96989c; }
.captions .close { width: 47px; }
.captions svg { width: 12px; height: 12px; }
.active { background: linear-gradient(#e9ecf0, #d5dae2 24px, #fff 40px, #fff 173px, #d5dae4 175px, #dfe3ea); box-shadow: inset 0 0 0 1px #fff, 0 2px 10px 4px rgba(0, 0, 0, .6); }
.active .captions, .active .captions button { border-color: #5d6470; }
.active .close { background: linear-gradient(#e0a49a, #c9604f 48%, #b53a26 50%, #d46a4a); border-radius: 0 0 4px 0; }

/* tape windows */
.tape-win { left: 14px; top: 5px; width: 211px; height: 546px; }
.recon-win { left: 251px; top: 5px; width: 259px; height: 618px; }
.tape-win .client, .recon-win .client { background: #000; }
.tape-tools { display: flex; flex: none; justify-content: flex-end; align-items: center; height: 31px; background: #f0f0f0; border-bottom: 1px solid #fff; }
.tape-tools button { width: 34px; height: 27px; display: grid; place-items: center; }
.tape-tools button + button { border-left: 1px solid #8d8d8d; }
.tape-tools svg, .dom-tools svg { width: 24px; height: 24px; }
.tape-tools button:nth-last-child(2) { width: 36px; }
.grip { flex: none; width: 4px; height: 26px; border-left: 2px dotted #bbb; }
.tape { width: 100%; line-height: 15px; }
.tape td { height: 15px; }
.up { color: #7cfc00; }
.down { color: #f00000; }
.flat { color: #fff; }
.tape .time { width: 48px; padding-left: 2px; }
.tape .price { width: 42px; }
.tape .size { width: 28px; text-align: right; }
.recon td { text-align: right; white-space: nowrap; }
.recon td:first-child { text-align: left; padding-left: 2px; }
.c-time { width: 48px; }
.c-price { width: 42px; }
.c-qty { width: 30px; }
.c-ask { width: 45px; }
.recon .total { padding-right: 8px; }
.recon .down.total { padding-right: 11px; }
.recon .blank td { padding-right: 12px; }
.recon .blank td:nth-child(5) { padding-right: 0; text-align: left; text-indent: -7px; }
.recon .blank .total { padding-right: 5px; }

/* ladder windows */
.dom-win { width: 619px; height: 618px; }
.dom-a { left: 528px; top: 4px; }
.dom-b { left: 1196px; top: 5px; }
.dom-tools { display: flex; flex: none; align-items: center; height: 30px; background: #fa8072; border-bottom: 1px solid #fff; }
.dom-tools .grip { width: 5px; border-color: #ffd6d0; margin-left: 2px; height: 20px; box-sizing: border-box; }
.dom-tools button { width: 34px; height: 22px; display: grid; place-items: center; border-right: 1px solid #fff; }
.dom-tools button:nth-last-child(-n+2) { border: 0; }
.dom-tools .list { margin-left: auto; width: 32px; }
.ladder { width: 100%; flex: none; font-size: 15px; font-weight: 700; line-height: 14px; }
.ladder td { height: 16px; text-align: right; vertical-align: top; padding-right: 2px; background-color: #d3d3d3; border: solid #a9a9a9; border-width: 0 1px 1px 0; }
.ladder tr { height: 17px; }
.ladder .sliver td { height: 3px; }
.ladder .sliver { height: 4px; }
.w84 { width: 84px; } .w51 { width: 51px; } .w59 { width: 59px; } .w43 { width: 43px; } .w42 { width: 42px; }
.ladder .px { background-color: #808080; color: #fff; }
.ladder .beyond { background-color: #000; }
.ladder .bid { background-color: #00008b; }
.ladder .ask { background-color: #8b0000; }
.ladder .vol { background-image: linear-gradient(#5f9ea0, #5f9ea0); background-repeat: no-repeat; background-position: right; }
.ladder .sold { color: #8b0000; }
.ladder .bought { color: #00f; }
.ladder .best { background-color: #fff; }
.ladder .current td { height: 15px; border-bottom: 2px solid #000; }
.ladder .current .hl, .ladder .current .px, .ladder .current .sold { background-color: #ff0; }
.ladder .current .px { color: #000; }

/* chart window */
.chart-win { left: -8px; top: 629px; width: 911px; bottom: -8px; }
.chart-win .client { margin-left: 1px; background: #fff; }
.chart-win h2 { margin-left: -4px; }
.link-btn { width: 33px; height: 19px; border: 2px solid #3fc4ea; background: #f2f2f2; margin-right: 2px; }
.chart-tools { display: flex; flex: none; align-items: center; gap: 6px; height: 25px; padding-bottom: 2px; box-sizing: border-box; background: linear-gradient(#fdfdfd, #eee); }
.chart-tools button { display: flex; align-items: center; height: 20px; }
.chart-tools svg { width: 16px; height: 16px; }
.chart-tools .drop::after { content: ""; margin-left: 1px; border: solid transparent; border-width: 3px 3px 0; border-top-color: #000; }
.chart-tools .drop:first-child::after { margin-left: -1px; }
.views { display: flex; gap: 7px; }
.sep { width: 1px; height: 16px; background: #c0c0c0; }
.plot { position: relative; flex: 1; display: flex; }
.candles { flex: 1; width: 100%; height: 100%; }
.candles text { font-size: 11px; }
.candles .tag { fill: #fff; }
.grid { stroke: #dcdcdc; }
.candles .g { fill: #90ee90; stroke: #000; }
.candles .r { fill: #f00; stroke: #000; }
.studies { position: absolute; left: -1px; top: 5px; white-space: nowrap; }

/* control center */
.control-win { left: 926px; top: 652px; right: -14px; height: 590px; border-radius: 7px 0 0 7px; }
.control-win .app-icon { width: 14px; margin-left: 2px; margin-right: 6px; }
.control-win .client { background: #f0f0f0; }
.menu { display: flex; flex: none; gap: 18px; height: 23px; padding-left: 15px; background: linear-gradient(90deg, #f0f0f0, #fcfcfc); border-bottom: 2px solid #777; font: 12px/22px "Segoe UI", "Open Sans", "Noto Sans", sans-serif; }
.menu button { height: 22px; }
.tabs { display: flex; flex: none; align-items: flex-end; height: 20px; padding-left: 3px; border-bottom: 1px solid #8c8e94; }
.tabs button { height: 18px; padding: 0 4px 1px 3px; background: linear-gradient(#f3f3f3, #d8d8d8); border: solid #8c8e94; border-width: 1px 2px 0 0; white-space: nowrap; }
.tabs .on { height: 20px; background: #fff; border-color: #c8c8c8; padding: 0 6px 2px; border-right: 1px solid #8c8e94; }
.tabs .last { padding-right: 18px; }
.pane { flex: 1; display: flex; flex-direction: column; min-height: 0; margin-left: 2px; padding: 1px 9px 5px 0; border-left: 5px solid #fff; border-bottom: 1px solid #8c8e94; box-shadow: inset 0 -5px #fff; }
.ticket { display: flex; flex: none; gap: 3px; height: 102px; }
.quotes { width: 165px; border: 1px solid #808080; border-width: 2px 0 0 1px; background: #fff; overflow: hidden; box-sizing: border-box; }
.quote { display: flex; line-height: 16px; text-align: center; }
.quote span { width: 56px; flex: none; box-sizing: border-box; }
.quote.head { background: #c0c0c0; line-height: 24px; }
.quote.head span + span { padding-right: 12px; }
.quote.mint { background: #f0fff0; }
.quote.tall { line-height: 20px; }
.entry { flex: 1; display: flex; gap: 8px; border: solid #808080; border-width: 2px 0 0 1px; padding-left: 10px; box-sizing: border-box; }
.ident { display: grid; grid-template-columns: 66px 148px; grid-auto-rows: 21px; row-gap: 3px; padding-top: 22px; height: 45px; }
.ident label { line-height: 26px; }
.fields { display: flex; gap: 8px; padding-top: 2px; }
.field { display: flex; flex-direction: column; }
.field label { line-height: 16px; padding: 0 0 4px 2px; }
.f88 { width: 88px; } .f70 { width: 68px; } .f80 { width: 80px; } .f72 { width: 72px; } .f56 { width: 56px; }
.off { color: #838383; }
.select { position: relative; display: block; height: 21px; }
.select select { appearance: none; width: 100%; height: 21px; padding: 0 14px 0 3px; border: 1px solid #707070; border-radius: 2px; background: linear-gradient(#f2f2f2, #ebebeb 50%, #ddd 50%, #cfcfcf); opacity: 1; }
.select::after { content: ""; position: absolute; right: 5px; top: 9px; border: solid transparent; border-width: 4px 4px 0; border-top-color: #000; pointer-events: none; }
.off .select select { border-color: #b0b0b0; background: #f0f0f0; }
.off .select::after { border-top-color: #999; }
.spin { display: flex; height: 20px; margin-top: 1px; box-sizing: border-box; border: 1px solid #abadb3; background: #fff; }
.spin input { flex: 1; min-width: 0; border: 0; padding: 0 0 2px 1px; background: none; }
.spin i { position: relative; width: 14px; margin: 1px; background: linear-gradient(#ececec 7px, #aaa 7px 9px, #ececec 9px); outline: 1px solid #c8c8c8; outline-offset: -1px; }
.spin i::before, .spin i::after { content: ""; position: absolute; left: 4px; border: 3px solid transparent; }
.spin i::before { top: 2px; border-top: 0; border-bottom-color: #3c5aa8; }
.spin i::after { bottom: 2px; border-bottom: 0; border-top-color: #3c5aa8; }
.off .spin { background: #f0f0f0; }
.off .spin i::before { border-bottom-color: #999; }
.off .spin i::after { border-top-color: #999; }
.plain-input { height: 20px; margin-top: 1px; border: 1px solid #e3e6ee; background: #fff; }
.trade-btns { display: flex; gap: 86px; margin-top: 22px; padding-left: 39px; }
.trade-btns button { width: 86px; height: 25px; border: 1px solid #707070; border-radius: 3px; box-shadow: inset 0 0 0 1px #f6f6f6, inset 0 -2px #d8d8d8; }
.buy { background: #f0fff0; }
.sell { background: #fff0f5; }
.orders { flex: 1; margin-top: 2px; border: solid #555; border-width: 2px 0 0 2px; border-right: 1px solid #eee; background: #a9a9a9; overflow: hidden; }
.orders table { width: 100%; }
.orders th, .orders td { height: 19px; text-align: center; white-space: nowrap; overflow: hidden; }
.orders th { background: linear-gradient(#fff 50%, #f3f5f7 50%); border-right: 1px solid #dfe1e4; border-bottom: 1px solid #d5d5d5; }
.orders td { height: 20px; background: #fff; border: solid #606060; border-width: 0 1px 1px 0; }
.orders td:first-child, .orders th:first-child { padding-left: 1px; }
.orders .accepted { background: #add8e6; }
.orders td button { display: block; width: calc(100% - 2px); height: 18px; margin: 1px; border: 1px solid #707070; border-radius: 2px; background: linear-gradient(#f2f2f2, #ebebeb 50%, #ddd 50%, #cfcfcf); }
.watermark { width: 520px; margin: 34px 0 0 238px; font: bold 19px/24px "Liberation Serif", serif; color: #b80000; text-shadow: 1px 1px 1px #100, -1px 0 1px #300; white-space: nowrap; }
.watermark p { display: flex; justify-content: space-between; font-weight: 700; }
.watermark .big { font-size: 22px; }
.status { display: flex; flex: none; gap: 3px; height: 20px; margin-top: 5px; padding: 0 0 3px 1px; box-sizing: border-box; border-top: 1px solid #999; }
.conn { padding: 0 2px; background: #90ee90; border: 1px solid #777; border-right-color: #fff; border-bottom-color: #fff; line-height: 15px; }
.rest { flex: 1; background: #f1edec; border: solid #6d6d6d; border-width: 1px 0 0 1px; }

/* license emulator */
.emu-win { left: 1593px; top: 1051px; width: 380px; height: 212px; border-radius: 0; }
.emu-win .title { height: 23px; }
.emu-win h2 { padding: 3px 0 0 2px; font-size: 11px; }
.emu-win .client { background: linear-gradient(#e8e9eb, #d3d5d8); }
.motto { display: flex; flex: none; align-items: center; gap: 9px; height: 30px; padding-left: 1px; font-size: 16px; line-height: 30px; color: #8f2a35; white-space: nowrap; }
.motto i { width: 85px; height: 1px; background: #8f2a35; }
.site { flex: none; padding-left: 18px; font: italic 20px/22px "Comic Sans MS", "Open Sans", sans-serif; color: #2398d4; text-decoration: none; white-space: nowrap; }
.brand { display: flex; flex: none; gap: 12px; align-items: center; height: 63px; padding-left: 19px; font: 200 46px/63px "DejaVu Sans", sans-serif; color: #857668; white-space: nowrap; }
.brand svg { width: 54px; height: 41px; }
.brand b { color: #8c262c; font-weight: 700; }
.emu-body { display: flex; gap: 61px; padding-left: 21px; }
.emu-btns { display: flex; flex-direction: column; gap: 9px; padding-top: 1px; font: 12px/18px "Segoe UI", "Liberation Sans", sans-serif; }
.emu-btns button { width: 64px; height: 23px; background: #f0f0f0; border: solid #222; border-width: 0 1px 1px 0; box-shadow: inset -1px -1px #808080, inset 1px 1px #fff; }
.emu-btns .start { border: 1px solid #000; border-right-width: 2px; border-bottom-width: 2px; color: #666; }
.emu-body ul { font: bold 16px/20px "DejaVu Sans", sans-serif; color: #606366; white-space: nowrap; }
.emu-body li { display: flex; align-items: center; gap: 5px; }
.emu-body svg { width: 14px; height: 14px; }
</style>
